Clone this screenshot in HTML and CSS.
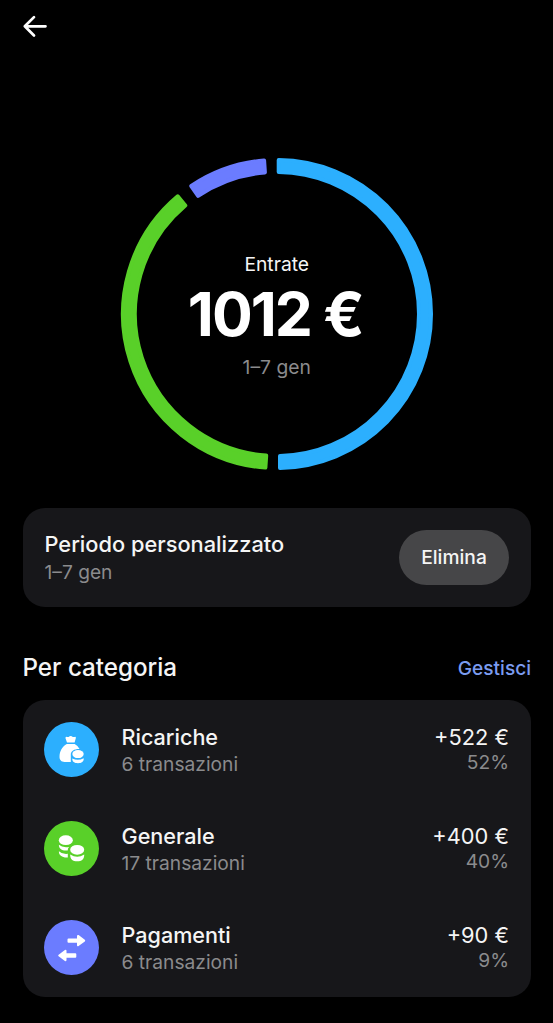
FILE: index.html
```
<!DOCTYPE html>
<html lang="it">
<head>
  <meta charset="UTF-8" />
  <meta name="viewport" content="width=device-width, initial-scale=1.0" />
  <title>Entrate</title>
  <link rel="stylesheet" href="styles.css">
</head>
<body>
  <header class="topbar">
    <button class="back" aria-label="Indietro">
      <svg width="26" height="24" viewBox="0 0 26 24" fill="none" stroke="#fff" stroke-width="2.7" stroke-linecap="round" stroke-linejoin="round">
        <path d="M23.5 12.3H2.8M12 3.1L2.8 12.3l9.2 9.2" />
      </svg>
    </button>
  </header>

  <main>
    <section class="chart">
      <svg class="ring" viewBox="0 0 314 314" aria-hidden="true">
        <path class="blue" d="M158.7 3A154 154 0 0 1 311 157A154 154 0 0 1 160 311L160 299A142 142 0 0 0 299 157A142 142 0 0 0 158.7 15Z" />
        <path class="green" d="M145.4 310.6A154 154 0 0 1 57.7 39.3L65.3 48.5A142 142 0 0 0 146.2 298.6Z" />
        <path class="purple" d="M71.3 29A154 154 0 0 1 144.1 3.5L144.9 15.5A142 142 0 0 0 78.1 38.9Z" />
      </svg>
      <div class="total">
        <p class="total-label">Entrate</p>
        <h1>1012 €</h1>
        <p class="total-period">1–7 gen</p>
      </div>
    </section>

    <section class="card period">
      <div class="text">
        <p class="title">Periodo personalizzato</p>
        <p class="sub">1–7 gen</p>
      </div>
      <button class="delete">Elimina</button>
    </section>

    <div class="section-head">
      <h2>Per categoria</h2>
      <a href="#" class="manage">Gestisci</a>
    </div>

    <ul class="card categories">
      <li>
        <svg class="icon" viewBox="0 0 55 55">
          <circle class="blue" cx="27.5" cy="27.5" r="27.5" />
          <path class="glyph" d="M21.5 16.2Q21.3 14.6 23 14.9L24.6 15.1Q26.7 13 28.8 15.1L30.6 14.9Q32.2 14.6 31.8 16.3L30.6 20.4H23Z" />
          <path class="glyph" d="M22.8 22H30.7Q34 23.8 35.6 27C30.5 26.8 26.8 29 26.8 32.5V40H20.5C17.4 40 15.5 38 15.5 34.8C15.5 29.3 18.2 24.5 22.8 22Z" />
          <ellipse class="glyph" cx="34" cy="32.1" rx="5.7" ry="4" />
          <path class="glyph" d="M28.3 36.4Q34 39.4 39.7 36.2C40 39.5 37.5 41.2 34 41.2C30.5 41.2 28 39.5 28.3 36.4Z" />
        </svg>
        <div class="text">
          <p class="title">Ricariche</p>
          <p class="sub">6 transazioni</p>
        </div>
        <div class="amount">
          <p class="title">+522 €</p>
          <p class="sub">52%</p>
        </div>
      </li>
      <li>
        <svg class="icon" viewBox="0 0 55 55">
          <circle class="green" cx="27.5" cy="27.5" r="27.5" />
          <ellipse class="glyph" cx="21.8" cy="19.2" rx="7" ry="4.9" />
          <path class="glyph" d="M14.9 23.7Q18.5 27 25.1 25.9Q23.7 27.2 23.7 29.5C18.5 30.2 14.7 27.9 14.9 23.7Z" />
          <path class="glyph" d="M14.9 30.2Q18 33.4 23.8 32.8V36.4C18.5 36.8 14.7 34.5 14.9 30.2Z" />
          <ellipse class="glyph" cx="33.2" cy="28.8" rx="7" ry="4.9" />
          <path class="glyph" d="M26.2 33.4Q33.2 38.2 40.2 33.4C40.5 38 37.5 40.3 33.2 40.3C28.9 40.3 25.9 38 26.2 33.4Z" />
        </svg>
        <div class="text">
          <p class="title">Generale</p>
          <p class="sub">17 transazioni</p>
        </div>
        <div class="amount">
          <p class="title">+400 €</p>
          <p class="sub">40%</p>
        </div>
      </li>
      <li>
        <svg class="icon" viewBox="0 0 55 55">
          <circle class="purple" cx="27.5" cy="27.5" r="27.5" />
          <path class="glyph arrow" d="M24.5 19.4H34V15.9L40.2 20.6L34 25.3V21.8H24.5Z" />
          <path class="glyph arrow" d="M31.3 34.3H21.5V30.8L15.2 35.5L21.5 40.2V36.7H31.3Z" />
        </svg>
        <div class="text">
          <p class="title">Pagamenti</p>
          <p class="sub">6 transazioni</p>
        </div>
        <div class="amount">
          <p class="title">+90 €</p>
          <p class="sub">9%</p>
        </div>
      </li>
    </ul>
  </main>
</body>
</html>
```
FILE: styles.css
```
:root {
  --card-bg: #17171a;
  --card-radius: 22px;
  --muted: #8b8b8d;
  --blue: #2caffe;
  --green: #59d029;
  --purple: #6b7cff;
}

* {
  box-sizing: border-box;
}

body {
  margin: 0;
  padding: 0 22px 0 22.5px;
  min-height: 100vh;
  background: #000;
  color: #f5f5f5;
  font-family: Inter, sans-serif;
}

h1, h2, p, ul {
  margin: 0;
  padding: 0;
}

button {
  border: 0;
  font-family: inherit;
  color: inherit;
  cursor: pointer;
}

.topbar {
  height: 157px;
  padding-top: 14px;
}

.back {
  display: flex;
  margin-left: -0.5px;
  padding: 0;
  background: none;
}

/* Donut chart */
.chart {
  display: grid;
  width: 314px;
  height: 314px;
  margin: 0 auto 37px;
}

.ring,
.total {
  grid-area: 1 / 1;
}

.ring path {
  stroke-width: 4;
  stroke-linejoin: round;
}

.blue {
  fill: var(--blue);
  stroke: var(--blue);
}

.green {
  fill: var(--green);
  stroke: var(--green);
}

.purple {
  fill: var(--purple);
  stroke: var(--purple);
}

.total {
  padding-top: 94px;
  text-align: center;
}

.total-label,
.total-period {
  font-size: 19.3px;
  line-height: 26px;
}

.total h1 {
  padding: 0 3px 2px 0;
  font-size: 60.5px;
  line-height: 75px;
  letter-spacing: -2px;
  color: #fff;
}

.total-period {
  color: var(--muted);
}

/* Cards */
.card {
  background: var(--card-bg);
  border-radius: var(--card-radius);
}

.title {
  font-size: 22px;
  line-height: 28px;
}

.sub {
  font-size: 19.2px;
  line-height: 27px;
  color: var(--muted);
}

.period {
  display: flex;
  align-items: center;
  justify-content: space-between;
  height: 99px;
  padding: 0 22px;
}

.period .text {
  padding-top: 1px;
}

.period .title {
  margin-bottom: 1px;
  font-size: 21.8px;
  font-weight: 500;
}

.delete {
  width: 110px;
  height: 55px;
  padding: 0 0 2px;
  border-radius: 28px;
  background: #464648;
  font-size: 19.2px;
  font-weight: 500;
}

.section-head {
  display: flex;
  align-items: center;
  justify-content: space-between;
  height: 93px;
  padding-top: 28px;
}

.section-head h2 {
  font-size: 24.2px;
  font-weight: 450;
}

.manage {
  color: #7b9cf0;
  font-size: 19.1px;
  font-weight: 500;
  text-decoration: none;
}

/* Category list */
.categories {
  list-style: none;
}

.categories li {
  display: flex;
  align-items: center;
  height: 99px;
  padding: 0 22px 0 21.7px;
}

.categories .text {
  padding-top: 2px;
}

.categories .text .title {
  font-size: 21.6px;
  font-weight: 450;
}

.icon {
  width: 55px;
  height: 55px;
  margin-right: 22.3px;
}

.icon circle {
  stroke: none;
}

.glyph {
  fill: #fff;
}

.arrow {
  stroke: #fff;
  stroke-width: 2;
  stroke-linejoin: round;
}

.amount {
  margin-left: auto;
  padding-bottom: 2px;
  text-align: right;
}

.amount .title {
  font-size: 21.8px;
}

.amount .sub {
  line-height: 23px;
}
```
